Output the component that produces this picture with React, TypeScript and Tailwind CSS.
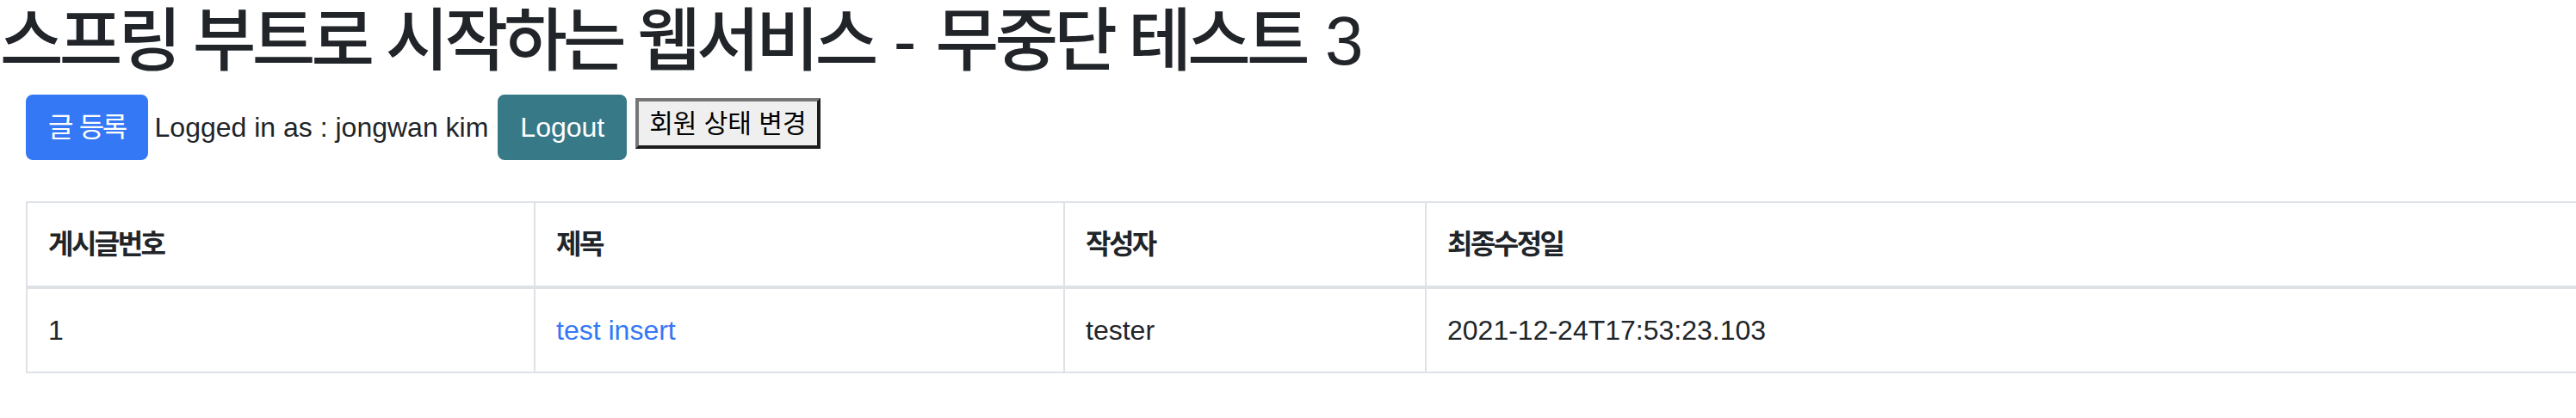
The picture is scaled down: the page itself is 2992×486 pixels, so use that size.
const FONT = "font-['Liberation_Sans','Noto_Sans_CJK_KR',sans-serif]"
const KO = 'tracking-[-0.08em]'

const columns = ['게시글번호', '제목', '작성자', '최종수정일']

const posts = [
  { id: 1, title: 'test insert', author: 'tester', modifiedDate: '2021-12-24T17:53:23.103' },
]

export default function App() {
  return (
    <div className={`flex h-[486px] w-[2992px] flex-col overflow-hidden bg-white text-[#212529] ${FONT}`}>
      <h1 className="mb-[14px] h-[96px] text-[80px] font-medium leading-[96px]">
        <span className="tracking-[-0.06em]">스프링 부트로 시작하는 웹서비스</span> -{' '}
        <span className="tracking-[-0.06em]">무중단 테스트</span> 3
      </h1>

      <div className="flex items-start pl-[30px]">
        <a className="rounded-[8px] border-2 border-[#3478f6] bg-[#3478f6] px-[24px] py-[12px] text-[32px] leading-[48px] text-white">
          <span className={KO}>글</span> <span className={KO}>등록</span>
        </a>
        <span className="ml-[8px] mt-[14px] text-[32px] leading-[48px]">Logged in as : jongwan kim</span>
        <a className="ml-[11px] rounded-[8px] border-2 border-[#387987] bg-[#387987] px-[24px] py-[12px] text-[32px] leading-[48px] text-white">
          Logout
        </a>
        <button className="ml-[10px] mt-[4px] flex h-[59px] items-center border-[4px] border-b-[#1c1c1c] border-l-[#767676] border-r-[#1c1c1c] border-t-[#767676] bg-[#efefef] px-[12px] text-[30px] text-black">
          회원 상태 변경
        </button>
      </div>

      <table className="ml-[30px] mt-[48px] w-[3100px] table-fixed border-collapse border-2 border-[#dee2e6] text-[32px] leading-[48px]">
        <colgroup>
          <col className="w-[590px]" />
          <col className="w-[615px]" />
          <col className="w-[420px]" />
          <col />
        </colgroup>
        <thead>
          <tr>
            {columns.map(column => (
              <th
                key={column}
                className="border-2 border-b-4 border-[#dee2e6] p-[24px] text-left align-bottom font-bold"
              >
                <span className={KO}>{column}</span>
              </th>
            ))}
          </tr>
        </thead>
        <tbody>
          {posts.map(post => (
            <tr key={post.id}>
              <td className="border-2 border-[#dee2e6] p-[24px]">{post.id}</td>
              <td className="border-2 border-[#dee2e6] p-[24px]">
                <a className="text-[#3478f6]">{post.title}</a>
              </td>
              <td className="border-2 border-[#dee2e6] p-[24px]">{post.author}</td>
              <td className="border-2 border-[#dee2e6] p-[24px]">{post.modifiedDate}</td>
            </tr>
          ))}
        </tbody>
      </table>
    </div>
  )
}
